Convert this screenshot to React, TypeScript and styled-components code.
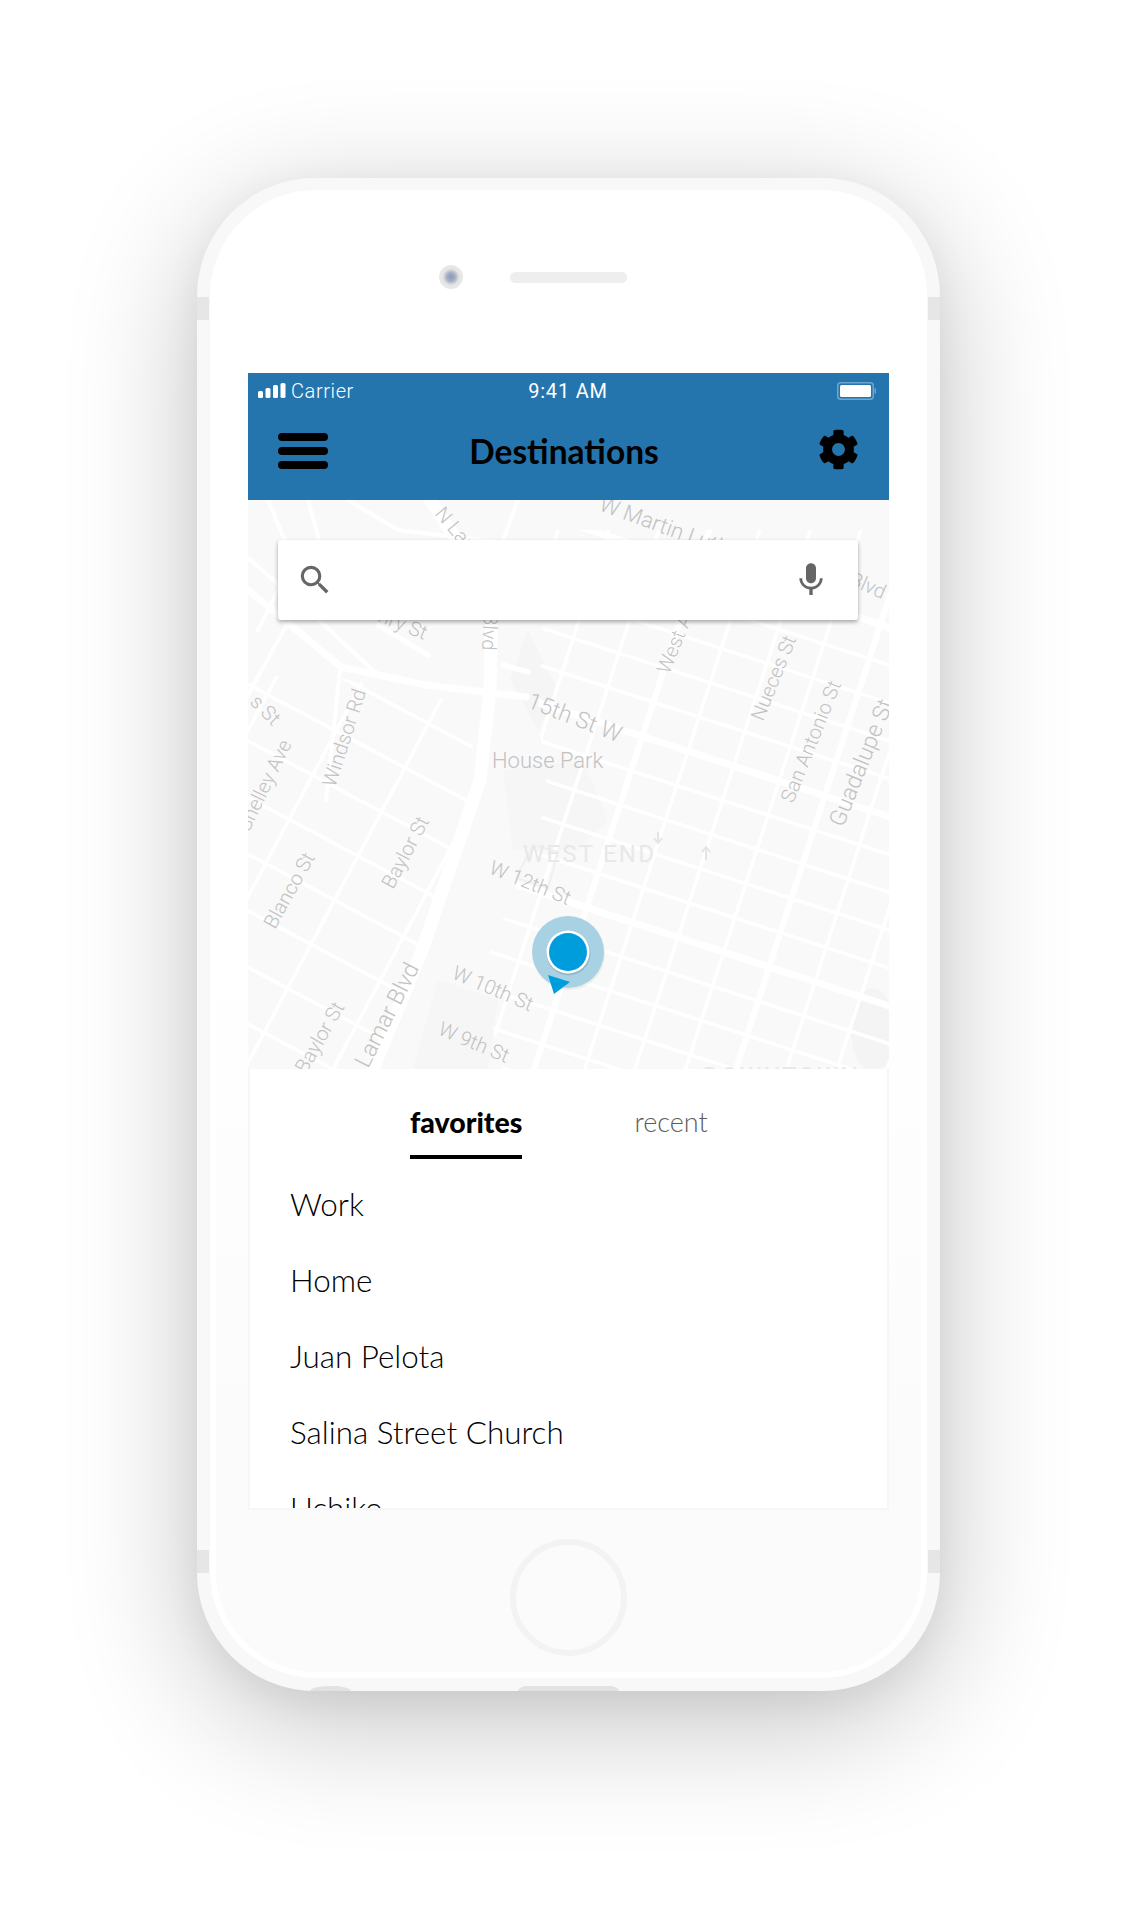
import React from "react";
import styled, { createGlobalStyle } from "styled-components";
import { FaCog } from "react-icons/fa";
import { MdMic, MdSearch } from "react-icons/md";

const GlobalStyle = createGlobalStyle`
  html, body {
    margin: 0;
    background: #ffffff;
  }
  body {
    height: 1910px;
    overflow: hidden;
    font-family: "Lato", "Liberation Sans", sans-serif;
  }
  * { box-sizing: border-box; }
`;

const favorites = ["Work", "Home", "Juan Pelota", "Salina Street Church", "Uchiko"];

type MapLabel = { text: string; x: number; y: number; rot: number; size?: number; anchor?: string };

const labels: MapLabel[] = [
  { text: "W Martin Luth", x: 350, y: 10, rot: 20, size: 22 },
  { text: "N Lamar", x: 186, y: 14, rot: 50 },
  { text: "Blvd", x: 600, y: 84, rot: 24 },
  { text: "Henry St", x: 176, y: 140, rot: 22, anchor: "end" },
  { text: "Blvd", x: 234, y: 150, rot: 93, anchor: "end" },
  { text: "West Ave", x: 421, y: 175, rot: -68 },
  { text: "Nueces St", x: 515, y: 222, rot: -68 },
  { text: "San Antonio St", x: 545, y: 304, rot: -68 },
  { text: "Guadalupe St", x: 595, y: 328, rot: -68, size: 23 },
  { text: "15th St W", x: 278, y: 207, rot: 21, size: 23 },
  { text: "House Park", x: 244, y: 268, rot: 0, size: 22 },
  { text: "Windsor Rd", x: 87, y: 288, rot: -72 },
  { text: "s St", x: 1, y: 203, rot: 45 },
  { text: "Shelley Ave", x: 44, y: 244, rot: -64, anchor: "end" },
  { text: "Blanco St", x: 27, y: 430, rot: -61 },
  { text: "Baylor St", x: 145, y: 390, rot: -62 },
  { text: "Lamar Blvd", x: 120, y: 569, rot: -63, size: 23 },
  { text: "Baylor St", x: 97, y: 507, rot: -60, anchor: "end" },
  { text: "W 12th St", x: 240, y: 373, rot: 22 },
  { text: "W 10th St", x: 203, y: 478, rot: 23 },
  { text: "W 9th St", x: 189, y: 534, rot: 23 },
];

const range = (from: number, count: number, step: number) =>
  Array.from({ length: count }, (_, i) => from + i * step);

const MapDrawing = () => (
  <MapSvg viewBox="0 0 641 569" width="641" height="569">
    <defs>
      <clipPath id="downtown">
        <polygon points="300,30 641,30 641,569 255,569 232,480 300,300 290,215" />
      </clipPath>
      <clipPath id="westside">
        <polygon points="0,175 90,178 228,205 222,290 170,450 118,569 0,569" />
      </clipPath>
    </defs>
    <rect width="641" height="569" fill="#f9f9f9" />

    {/* parks and blocks */}
    <polygon points="255,270 335,260 360,320 330,350 265,350" fill="#f6f6f6" />
    <polygon points="190,480 250,500 240,569 165,569" fill="#f6f6f6" />
    <polygon points="280,130 310,190 290,230 262,180" fill="#f5f5f5" />
    <ellipse cx="625" cy="530" rx="22" ry="42" fill="#f4f4f4" />

    <g clipPath="url(#downtown)">
      <g transform="rotate(18 320 452)" stroke="#ffffff" fill="none">
        {range(-10, 24, 1).map((n) => (
          <line
            key={n}
            x1="-200"
            y1={452 - 48 + n * 36}
            x2="900"
            y2={452 - 48 + n * 36}
            strokeWidth={n % 5 === 0 ? 7 : 3.5}
          />
        ))}
        {range(0, 16, 1).map((n) => (
          <line
            key={n}
            x1={180 + n * 48}
            y1="-200"
            x2={180 + n * 48}
            y2="900"
            strokeWidth={n % 4 === 3 ? 6 : 3.5}
          />
        ))}
      </g>
    </g>

    <g clipPath="url(#westside)">
      <g transform="rotate(28 120 350)" stroke="#ffffff" fill="none" strokeWidth="3.5">
        {range(60, 12, 50).map((y) => (
          <line key={y} x1="-200" y1={y} x2="500" y2={y} />
        ))}
        {range(-120, 8, 78).map((x) => (
          <line key={x} x1={x} y1="-100" x2={x} y2="800" />
        ))}
      </g>
    </g>

    <g stroke="#ffffff" fill="none" strokeLinecap="round" strokeLinejoin="round">
      <polyline points="125,569 173,453 232,280 242,190 244,100 222,60 182,0" strokeWidth="13" />
      <polyline points="0,90 93,167 178,185 278,197" strokeWidth="7" />
      <polyline points="0,58 60,110 130,175" strokeWidth="4" />
      <polyline points="20,0 45,60 10,130" strokeWidth="4" />
      <polyline points="60,0 75,55" strokeWidth="4" />
      <polyline points="38,126 0,195" strokeWidth="4" />
      <polyline points="92,170 78,300" strokeWidth="4" />
      <polyline points="100,0 150,30 250,42" strokeWidth="4" />
      <polyline points="270,0 255,40 262,60" strokeWidth="4" />
      <polyline points="130,125 180,155" strokeWidth="5" />
      <polyline points="255,165 280,172" strokeWidth="5" />
    </g>

    <polygon points="268,378 285,345 310,352 300,388" fill="none" stroke="#f0f0f0" strokeWidth="2" />
    <path d="M410 332 v10 M406 338 l4 5 l4 -5" stroke="#e4e4e4" strokeWidth="2" fill="none" />
    <path d="M458 360 v-12 M454 352 l4 -5 l4 5" stroke="#e4e4e4" strokeWidth="2" fill="none" />

    {labels.map((l) => (
      <MapText
        key={l.text + l.x}
        x={l.x}
        y={l.y}
        fontSize={l.size ?? 20}
        textAnchor={l.anchor ?? "start"}
        transform={`rotate(${l.rot} ${l.x} ${l.y})`}
      >
        {l.text}
      </MapText>
    ))}
    <DistrictText x="275" y="362">WEST END</DistrictText>
    <DistrictText x="455" y="584">DOWNTOWN</DistrictText>

    <circle cx="321" cy="454" r="36" fill="rgba(0,0,0,0.05)" />
    <circle cx="320" cy="452" r="36" fill="#a8d2e4" />
    <circle cx="320.5" cy="453.5" r="22" fill="rgba(0,0,0,0.12)" />
    <circle cx="320" cy="452" r="21.5" fill="#ffffff" />
    <circle cx="320" cy="452" r="19" fill="#009ddc" />
    <polygon points="300,475 322,482 306,494" fill="#009ddc" />
  </MapSvg>
);

const App = () => (
  <>
    <GlobalStyle />
    <Page>
      <Phone>
        <SideKey $side="left" $top={119} />
        <SideKey $side="right" $top={119} />
        <SideKey $side="left" $top={1372} />
        <SideKey $side="right" $top={1372} />
        <BottomNotch $left={113} $width={41} $round />
        <BottomNotch $left={321} $width={101} />

        <Face>
          <TopSensors>
            <Camera />
            <Speaker />
          </TopSensors>

          <Screen>
            <Header>
              <StatusBar>
                <StatusLeft>
                  <svg width="28" height="15" viewBox="0 0 28 15">
                    <rect x="0" y="8" width="5" height="7" rx="1.5" fill="#fff" />
                    <rect x="7.5" y="5" width="5" height="10" rx="1.5" fill="#fff" />
                    <rect x="15" y="2" width="5" height="13" rx="1.5" fill="#fff" />
                    <rect x="22.5" y="0" width="5" height="15" rx="1.5" fill="#fff" />
                  </svg>
                  <StatusText>Carrier</StatusText>
                </StatusLeft>
                <StatusTime>9:41 AM</StatusTime>
                <svg width="39" height="18" viewBox="0 0 39 18">
                  <rect x="0.75" y="0.75" width="35.5" height="16.5" rx="3" fill="none" stroke="#6ea6cd" strokeWidth="1.5" />
                  <rect x="3" y="3" width="31" height="12" rx="1.5" fill="#fff" />
                  <rect x="37.5" y="6.5" width="1.5" height="5" fill="#6ea6cd" />
                </svg>
              </StatusBar>
              <NavBar>
                <Burger>
                  <BurgerBar />
                  <BurgerBar />
                  <BurgerBar />
                </Burger>
                <Title>Destinations</Title>
                <FaCog size={41} color="#000000" />
              </NavBar>
            </Header>

            <MapArea>
              <MapDrawing />
              <SearchBar>
                <MdSearch size={38} color="#666666" />
                <MdMic size={40} color="#666666" />
              </SearchBar>
            </MapArea>

            <Panel>
              <Tabs>
                <Tab $active>favorites</Tab>
                <Tab>recent</Tab>
              </Tabs>
              <List>
                {favorites.map((name) => (
                  <ListRow key={name}>{name}</ListRow>
                ))}
              </List>
            </Panel>
          </Screen>

          <HomeButton />
        </Face>
      </Phone>
    </Page>
  </>
);

const Page = styled.div`
  width: 1136px;
  height: 1910px;
  padding: 178px 0 0 197px;
  overflow: hidden;
`;

const Phone = styled.div`
  position: relative;
  width: 743px;
  height: 1513px;
  padding: 12px 13px 13px 13px;
  background: #f8f8f8;
  border-radius: 118px;
  box-shadow: 0 30px 130px rgba(0, 0, 0, 0.24), 0 10px 40px rgba(0, 0, 0, 0.05);
`;

const SideKey = styled.div<{ $side: "left" | "right"; $top: number }>`
  position: absolute;
  top: ${(p) => p.$top}px;
  ${(p) => p.$side}: 0;
  width: 12px;
  height: 23px;
  background: #e6e6e6;
`;

const BottomNotch = styled.div<{ $left: number; $width: number; $round?: boolean }>`
  position: absolute;
  bottom: 0;
  left: ${(p) => p.$left}px;
  width: ${(p) => p.$width}px;
  height: 5px;
  background: #e2e2e2;
  border-radius: ${(p) => (p.$round ? "50% 50% 0 0 / 100% 100% 0 0" : "10px 10px 0 0 / 5px 5px 0 0")};
`;

const Face = styled.div`
  width: 717px;
  height: 1488px;
  display: flex;
  flex-direction: column;
  align-items: center;
  background: linear-gradient(#ffffff 0%, #ffffff 50%, #fbfbfb 85%);
  border: 6px solid #ffffff;
  border-radius: 106px;
`;

const TopSensors = styled.div`
  height: 177px;
  width: 100%;
  display: flex;
  align-items: flex-start;
  padding: 69px 0 0 223px;
  gap: 47px;
`;

const Camera = styled.div`
  width: 24px;
  height: 24px;
  border-radius: 50%;
  background: radial-gradient(circle, #8a98b8 0, #a8b0c4 26%, #e4e4e4 48%, #f0f0f0 100%);
`;

const Speaker = styled.div`
  width: 117px;
  height: 11px;
  margin-top: 7px;
  background: #eeeeee;
  border-radius: 6px;
`;

const Screen = styled.div`
  width: 641px;
  height: 1137px;
  display: flex;
  flex-direction: column;
`;

const Header = styled.div`
  height: 127px;
  background: #2475ae;
  display: flex;
  flex-direction: column;
`;

const StatusBar = styled.div`
  height: 35px;
  padding: 0 13px 0 10px;
  display: flex;
  align-items: center;
  justify-content: space-between;
  color: #ffffff;
`;

const StatusLeft = styled.div`
  display: flex;
  align-items: center;
  gap: 5px;
  width: 117px;
`;

const StatusText = styled.span`
  font-family: "Roboto", sans-serif;
  font-size: 20px;
  font-weight: 300;
  letter-spacing: 0.6px;
`;

const StatusTime = styled.span`
  font-family: "Roboto", sans-serif;
  font-size: 20px;
  letter-spacing: 0.8px;
  margin-right: 76px;
`;

const NavBar = styled.div`
  flex: 1;
  display: flex;
  align-items: center;
  justify-content: space-between;
  padding: 0 30px 10px 30px;
`;

const Burger = styled.div`
  display: flex;
  flex-direction: column;
  gap: 6px;
  width: 50px;
  margin-top: 3px;
`;

const BurgerBar = styled.div`
  height: 8px;
  background: #000000;
  border-radius: 4px;
`;

const Title = styled.h1`
  margin: 3px 18px 0 0;
  font-size: 33.5px;
  font-weight: 700;
  color: #000000;
`;

const MapArea = styled.div`
  position: relative;
  height: 569px;
  overflow: hidden;
`;

const MapSvg = styled.svg`
  display: block;
`;

const MapText = styled.text`
  font-family: "Roboto", sans-serif;
  font-weight: 300;
  fill: #c2c2c2;
`;

const DistrictText = styled.text`
  font-family: "Roboto", sans-serif;
  font-size: 24px;
  letter-spacing: 2.2px;
  fill: #e8e8e8;
`;

const SearchBar = styled.div`
  position: absolute;
  top: 40px;
  left: 30px;
  width: 580px;
  height: 80px;
  padding: 0 27px 0 18px;
  display: flex;
  align-items: center;
  justify-content: space-between;
  background: #ffffff;
  border-radius: 3px;
  box-shadow: 0 2px 4px rgba(0, 0, 0, 0.35);
`;

const Panel = styled.div`
  flex: 1;
  min-height: 0;
  background: #ffffff;
  border: solid #f6f6f6;
  border-width: 0 2px 2px 2px;
  display: flex;
  flex-direction: column;
  overflow: hidden;
`;

const Tabs = styled.div`
  display: flex;
  gap: 112px;
  padding: 33px 0 0 160px;
`;

const Tab = styled.div<{ $active?: boolean }>`
  padding-bottom: 13px;
  font-size: ${(p) => (p.$active ? 28.5 : 27)}px;
  line-height: 40px;
  font-weight: ${(p) => (p.$active ? 900 : 300)};
  color: ${(p) => (p.$active ? "#000000" : "#5c5c5c")};
  border-bottom: 4px solid ${(p) => (p.$active ? "#000000" : "transparent")};
`;

const List = styled.div`
  padding: 7px 0 0 40px;
`;

const ListRow = styled.div`
  height: 76px;
  display: flex;
  align-items: center;
  font-size: 31.4px;
  font-weight: 300;
  color: #000000;
`;

const HomeButton = styled.div`
  width: 117px;
  height: 117px;
  margin-top: 29px;
  border-radius: 50%;
  border: 6px solid #f3f3f3;
`;

export default App;
